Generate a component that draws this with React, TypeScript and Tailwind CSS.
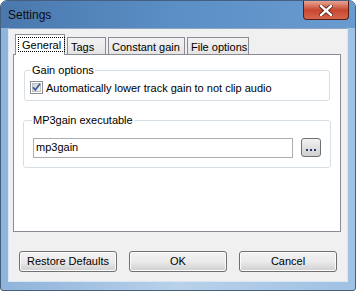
import React from "react";

const TABS = [
  { label: "General", w: "w-[50px]" },
  { label: "Tags", w: "w-[39px]" },
  { label: "Constant gain", w: "w-[77px]" },
  { label: "File options", w: "w-[62px]" },
];

const WinButton = ({ label, className }: { label: string; className: string }) => (
  <button
    className={`h-[21px] rounded-[3px] border border-[#707070] bg-gradient-to-b from-[#f2f2f2] via-[#ebebeb] to-[#cfcfcf] text-[11px] text-black shadow-[inset_0_0_0_1px_#fcfcfc] ${className}`}
  >
    {label}
  </button>
);

const CheckBox = () => (
  <svg width="13" height="13" viewBox="0 0 13 13" className="shrink-0">
    <defs>
      <linearGradient id="cb" x1="0" y1="0" x2="1" y2="1">
        <stop offset="0" stopColor="#cbcfd5" />
        <stop offset="1" stopColor="#f6f6f6" />
      </linearGradient>
    </defs>
    <rect x="0.5" y="0.5" width="12" height="12" fill="#fff" stroke="#8e8f8f" />
    <rect x="2.5" y="2.5" width="8" height="8" fill="url(#cb)" stroke="#b4b7bc" strokeWidth="0.8" />
    <path d="M3 6.2 L5.3 9 L10 2.8" fill="none" stroke="#3d5795" strokeWidth="1.7" />
  </svg>
);

export default function App() {
  return (
    <div
      className="w-[356px] h-[291px] flex flex-col rounded-t-[7px] rounded-b-[3px] border border-[#45607e] bg-gradient-to-r from-[#8fb3da] via-[#b9d1ea] to-[#9fc1e3] overflow-hidden"
      style={{ fontFamily: '"Liberation Sans", Arial, sans-serif' }}
    >
      {/* title bar */}
      <div className="h-[27px] shrink-0 flex items-start justify-between bg-gradient-to-r from-[#4a78ad] via-[#5b8fc6] to-[#6a9bcf]">
        <span className="mt-[7px] ml-[7px] text-[12px] text-[#0c0c0c] leading-[14px]">Settings</span>
        <div className="mr-[6px] w-[46px] h-[19px] rounded-b-[4px] border border-t-0 border-[#5a1c12] bg-gradient-to-b from-[#e4a394] via-[#c9462f] to-[#d4664d] flex items-center justify-center">
          <svg width="14" height="11" viewBox="0 0 14 11">
            <path d="M2 1 L12 10 M12 1 L2 10" stroke="#4a1a10" strokeWidth="4" strokeLinecap="square" />
            <path d="M2 1 L12 10 M12 1 L2 10" stroke="#ffffff" strokeWidth="2.4" strokeLinecap="square" />
          </svg>
        </div>
      </div>

      {/* client area */}
      <div className="mx-[7px] mb-[8px] flex-1 flex flex-col bg-[#f0f0f0] border border-[#d9e6f3] border-t-[#8ea7c2]">
        {/* tabs */}
        <div className="flex items-end h-[26px] ml-[6px] gap-[2px] -mb-px">
          {TABS.map((t, i) =>
            i === 0 ? (
              <div
                key={t.label}
                className={`relative z-10 ${t.w} h-[21px] pl-[2px] pt-[2px] bg-white border border-b-0 border-[#898c95] text-[11px] text-black whitespace-nowrap`}
              >
                <span className="inline-block h-[15px] leading-[14px] px-[3px] border border-dotted border-black">{t.label}</span>
              </div>
            ) : (
              <div
                key={t.label}
                className={`${t.w} h-[18px] pl-[3px] pt-[2px] bg-gradient-to-b from-[#f3f3f3] to-[#e3e3e3] border border-b-0 border-[#898c95] text-[11px] leading-[14px] text-black whitespace-nowrap overflow-hidden`}
              >
                {t.label}
              </div>
            )
          )}
        </div>

        {/* panel */}
        <div className="ml-[4px] w-[328px] h-[178px] bg-white border border-[#898c95] px-[9px] pt-[7px] flex flex-col gap-[11px]">
          <fieldset className="border border-[#d5dfe5] rounded-[3px] px-[5px] pb-[4px] pt-[1px] mx-[1px]">
            <legend className="px-[1px] ml-[1px] text-[11px] text-black">Gain options</legend>
            <label className="flex items-center gap-[3px] text-[11px] text-black">
              <CheckBox />
              <span>Automatically lower track gain to not clip audio</span>
            </label>
          </fieldset>

          <fieldset className="border border-[#d5dfe5] rounded-[3px] px-[9px] pb-[9px] pt-[9px]">
            <legend className="px-[1px] ml-[-1px] text-[11px] text-black">MP3gain executable</legend>
            <div className="flex items-center justify-between">
              <div className="w-[260px] h-[20px] border border-[#abadb3] bg-white text-[11px] text-black flex items-center pl-[2px]">
                mp3gain
              </div>
              <div className="w-[20px] h-[19px] rounded-[3px] border border-[#707070] bg-gradient-to-b from-[#f2f2f2] to-[#d0d0d0] flex items-end justify-center pb-[5px] gap-[2px]">
                <span className="w-[2px] h-[2px] bg-[#2a3a66]" />
                <span className="w-[2px] h-[2px] bg-[#2a3a66]" />
                <span className="w-[2px] h-[2px] bg-[#2a3a66]" />
              </div>
            </div>
          </fieldset>
        </div>

        {/* buttons */}
        <div className="mt-[19px] flex pl-[10px] gap-[12px]">
          <WinButton label="Restore Defaults" className="w-[98px]" />
          <WinButton label="OK" className="w-[98px]" />
          <WinButton label="Cancel" className="w-[98px]" />
        </div>
      </div>
    </div>
  );
}
